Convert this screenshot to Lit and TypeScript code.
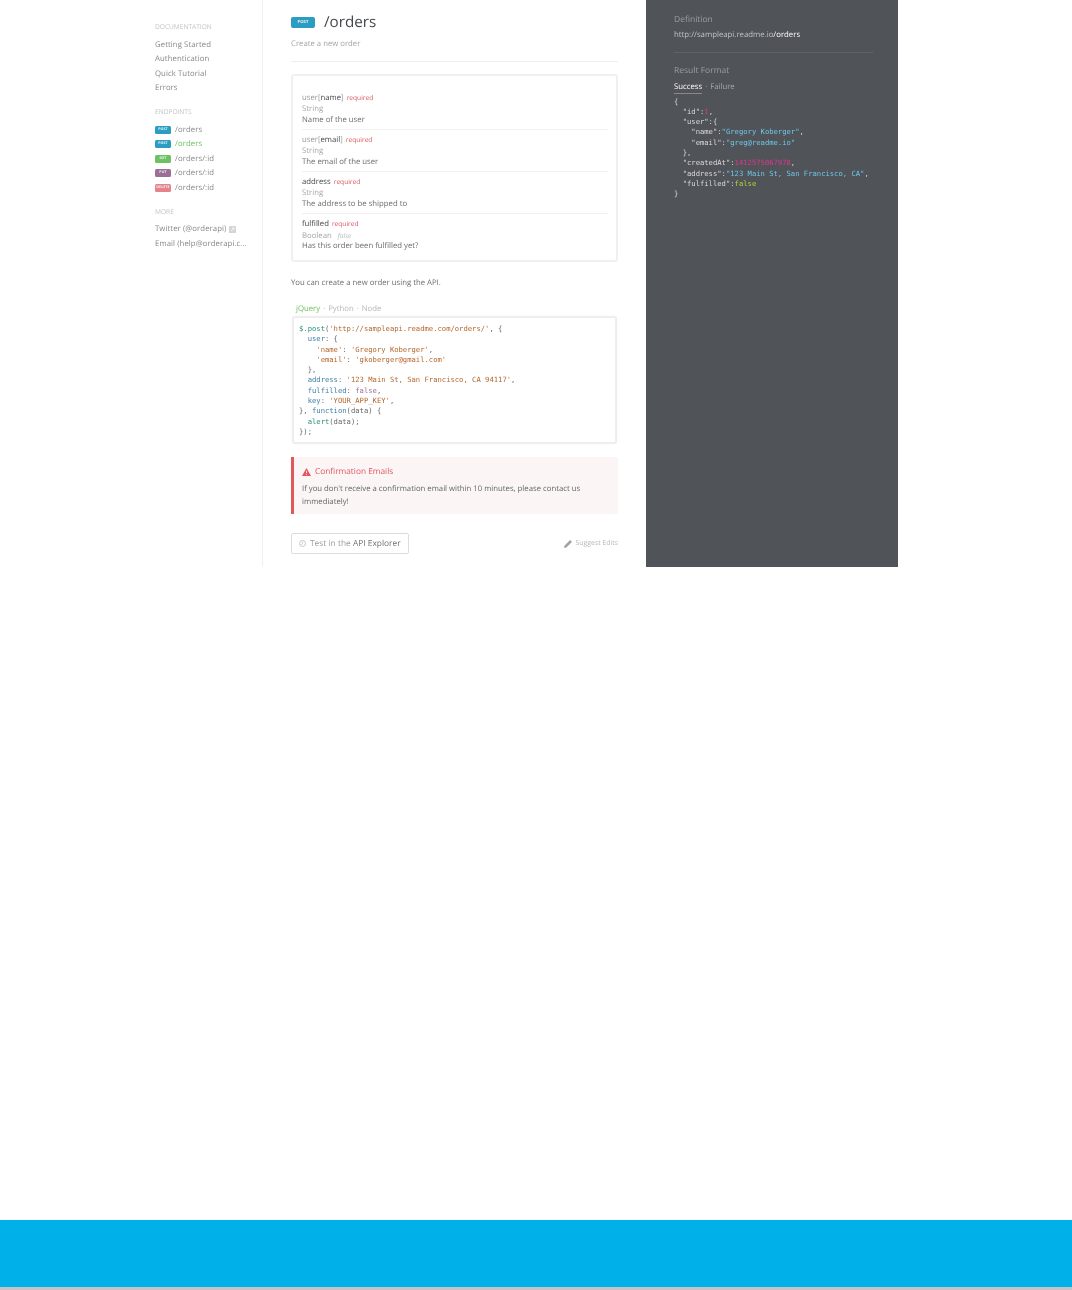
import { LitElement, html, css } from "lit";
import { customElement } from "lit/decorators.js";

const nav = ["Getting Started", "Authentication", "Quick Tutorial", "Errors"];
const eps = [
  ["POST", "post", "/orders", false],
  ["POST", "post", "/orders", true],
  ["GET", "get", "/orders/:id", false],
  ["PUT", "put", "/orders/:id", false],
  ["DELETE", "del", "/orders/:id", false],
] as const;
const params = [
  { pre: "user[", key: "name", post: "]", type: "String", desc: "Name of the user" },
  { pre: "user[", key: "email", post: "]", type: "String", desc: "The email of the user" },
  { pre: "", key: "address", post: "", type: "String", desc: "The address to be shipped to" },
  { pre: "", key: "fulfilled", post: "", type: "Boolean", def: "false", desc: "Has this order been fulfilled yet?" },
];

@customElement("app-root")
export class AppRoot extends LitElement {
  static styles = css`
    :host { display: block; height: 1290px; background: #fff; font-family: "Open Sans", sans-serif; font-size: 7.75px; color: #55585e; overflow: hidden; text-rendering: geometricPrecision; }
    .page { display: flex; flex-direction: column; height: 1290px; }
    .doc { display: flex; height: 567px; margin-left: 155px; width: 743px; flex: none; filter: blur(0.25px); }
    .side { width: 107px; flex: none; border-right: 1px solid #f0f0f0; padding-top: 20px; box-sizing: content-box; }
    .side h4 { margin: 0; font-size: 6.6px; line-height: 14px; font-weight: 400; color: #c2c4c7; text-transform: uppercase; }
    .side ul { list-style: none; margin: 0 0 9.5px; padding: 3.5px 0 0; }
    .side li { height: 14.5px; line-height: 14.5px; white-space: nowrap; color: #85888c; letter-spacing: .08px; display: flex; align-items: center; }
    .badge { display: inline-flex; align-items: center; justify-content: center; width: 16px; height: 8px; border-radius: 1.5px; color: #e6f2f6; font-size: 3.6px; font-weight: 700; margin-right: 4px; flex: none; letter-spacing: .1px; }
    .post { background: #2a9dc0; } .get { background: #6cc261; } .put { background: #9c6f97; } .del { background: #e5828a; }
    .active { color: #6cbf5c !important; }
    .ext { margin-left: 3px; }
    .main { width: 327px; margin-left: 28px; flex: none; }
    .head { display: flex; align-items: center; height: 22px; margin-top: 11px; }
    .head .badge { width: 24px; height: 11px; font-size: 4.2px; margin-right: 9px; border-radius: 2px; }
    .head h1 { margin: 0.4px 0 0; font-size: 15.2px; font-weight: 400; color: #43464b; line-height: 22px; }
    .sub { margin: 5.5px 0 0; line-height: 10px; color: #a2a4a7; height: 12.5px; }
    hr { border: 0; border-top: 1px solid #eeeeee; margin: 0; }
    .head-rule { margin-top: 10px; }
    .box { margin-top: 12px; border: 2px solid #f0f0f0; border-radius: 3px; height: 188px; box-sizing: border-box; padding: 11.6px 8px 0 9px; }
    .param { height: 42px; border-bottom: 1px solid #f1f1f1; box-sizing: border-box; padding-top: 4.2px; }
    .param:last-child { border: 0; }
    .param div { line-height: 11.4px; height: 11.4px; white-space: nowrap; }
    .param .name { color: #96989c; height: 11.8px; }
    .name b { font-weight: 400; color: #43464b; }
    .req { color: #d9555f; font-size: 6.6px; margin-left: 1px; }
    .type { color: #a4a6a9; }
    .def { color: #b5b7ba; font-style: italic; font-size: 6.6px; margin-left: 6px; }
    .desc { color: #6a6d72; }
    .para { margin: 16px 0 0; line-height: 11px; color: #6a6d72; }
    .tabs { margin: 15px 0 0 5px; line-height: 11px; color: #b6b8bb; display: flex; gap: 3px; }
    .tabs .on { color: #6cbf5c; }
    .code { margin: 1px 1px 0; height: 128px; border: 2px solid #eeeeee; border-radius: 3px; box-sizing: border-box; padding: 6px 5px 0; font-family: "DejaVu Sans Mono", monospace; font-size: 7.2px; line-height: 10.3px; white-space: pre; color: #63666b; box-shadow: 0 0 1px #ddd; }
    .alert { margin-top: 13px; height: 57px; background: #fbf6f5; border-left: 3px solid #e0575d; box-sizing: border-box; padding: 8px 8px 0; }
    .alert h5 { margin: 0 0 5px; font-size: 8.3px; line-height: 13px; font-weight: 400; color: #e0575d; display: flex; align-items: center; gap: 4px; }
    .alert p { margin: 0; line-height: 13px; color: #63666b; }
    .foot { display: flex; justify-content: space-between; align-items: center; margin-top: 19px; height: 21px; }
    .btn { width: 118px; height: 21px; box-sizing: border-box; border: 1px solid #dcdcdc; border-radius: 2px; display: flex; align-items: center; gap: 4px; padding: 0 0 1px 7px; color: #9a9ca0; white-space: nowrap; font-size: 8.4px; }
    .btn b { font-weight: 400; color: #6f7276; }
    .edit { display: flex; align-items: center; gap: 4px; color: #b5b7ba; font-size: 6.9px; }
    .right { width: 252px; margin-left: 28px; flex: none; background: #505358; padding: 14px 25px 0 28px; box-sizing: border-box; color: #a4a7aa; }
    .right h3 { margin: 0; font-weight: 400; font-size: 8.5px; line-height: 12px; color: #9a9da1; }
    .url { margin-top: 4px; line-height: 11px; color: #c2c4c6; font-size: 7.8px; }
    .url b { font-weight: 400; color: #fff; }
    .rrule { border-top: 1px solid #5f6267; margin-top: 11px; margin-bottom: 12px; }
    .rtabs { margin-top: 5px; line-height: 11px; height: 12px; display: flex; gap: 3px; align-items: flex-start; }
    .rtabs .on { color: #fff; border-bottom: 1px solid #85888c; padding-bottom: 0; }
    .rcode { margin-top: 2.6px; font-family: "DejaVu Sans Mono", monospace; font-size: 7.2px; line-height: 10.3px; white-space: pre; color: #d8dadc; }
    .s { color: #b5672d; } .k { color: #3c7fa6; } .p { color: #9c6f97; } .f { color: #2a8f7c; }
    .rs { color: #6fc6e8; } .rn { color: #e0368f; } .rb { color: #b5d334; }
    .spacer { flex: 1; }
    .band { height: 67px; background: #00b0e8; flex: none; }
    .band-edge { height: 3px; background: #c4c4c4; flex: none; }
  `;

  render() {
    const gap = html`<span>·</span>`;
    return html`<div class="page">
      <div class="doc">
        <aside class="side">
          <h4>Documentation</h4>
          <ul>${nav.map((n) => html`<li>${n}</li>`)}</ul>
          <h4>Endpoints</h4>
          <ul>${eps.map(([l, c, p, a]) => html`<li class=${a ? "active" : ""}><span class="badge ${c}">${l}</span>${p}</li>`)}</ul>
          <h4>More</h4>
          <ul>
            <li>Twitter (@orderapi)<svg class="ext" width="7" height="7" viewBox="0 0 7 7">
              <rect width="7" height="7" rx=".6" fill="#d4d5d7"/><path d="M2 5 5 2M3 2h2v2" stroke="#fff" stroke-width=".7" fill="none"/></svg></li>
            <li>Email (help@orderapi.c...</li>
          </ul>
        </aside>
        <main class="main">
          <div class="head"><span class="badge post">POST</span><h1>/orders</h1></div>
          <p class="sub">Create a new order</p>
          <hr class="head-rule" />
          <div class="box">
            ${params.map((p) => html`<div class="param">
              <div class="name">${p.pre}<b>${p.key}</b>${p.post} <span class="req">required</span></div>
              <div class="type">${p.type}${p.def ? html`<span class="def">${p.def}</span>` : ""}</div>
              <div class="desc">${p.desc}</div>
            </div>`)}
          </div>
          <p class="para">You can create a new order using the API.</p>
          <div class="tabs"><span class="on">jQuery</span>${gap}<span>Python</span>${gap}<span>Node</span></div>
          <div class="code"><span class="f">$.post</span>(<span class="s">'http://sampleapi.readme.com/orders/'</span>, {
  <span class="k">user</span>: {
    <span class="s">'name'</span>: <span class="s">'Gregory Koberger'</span>,
    <span class="s">'email'</span>: <span class="s">'gkoberger@gmail.com'</span>
  },
  <span class="k">address</span>: <span class="s">'123 Main St, San Francisco, CA 94117'</span>,
  <span class="k">fulfilled</span>: <span class="p">false</span>,
  <span class="k">key</span>: <span class="s">'YOUR_APP_KEY'</span>,
}, <span class="k">function</span>(data) {
  <span class="f">alert</span>(data);
});</div>
          <div class="alert">
            <h5><svg width="9" height="8" viewBox="0 0 9 8"><path d="M4.5 0 9 8H0Z" fill="#e0575d"/><path d="M4.5 2.8v2.4M4.5 6v.8" stroke="#fbf6f5" stroke-width=".9"/></svg>Confirmation Emails</h5>
            <p>If you don't receive a confirmation email within 10 minutes, please contact us immediately!</p>
          </div>
          <div class="foot">
            <div class="btn"><svg width="7" height="7" viewBox="0 0 7 7"><circle cx="3.5" cy="3.5" r="3" fill="none" stroke="#b5b7ba" stroke-width=".8"/><path d="M3.5 1.8v1.8L2.2 5" fill="none" stroke="#b5b7ba" stroke-width=".7"/></svg><span>Test in the <b>API Explorer</b></span></div>
            <div class="edit"><svg width="8" height="8" viewBox="0 0 8 8"><path d="M0 8l.6-2.4L5.6.6a.8.8 0 0 1 1.1 0l.7.7a.8.8 0 0 1 0 1.1L2.4 7.4Z" fill="#a0a2a6"/></svg>Suggest Edits</div>
          </div>
        </main>
        <section class="right">
          <h3>Definition</h3>
          <div class="url">http://sampleapi.readme.io<b>/orders</b></div>
          <div class="rrule"></div>
          <h3>Result Format</h3>
          <div class="rtabs"><span class="on">Success</span>${gap}<span>Failure</span></div>
          <div class="rcode">{
  "id":<span class="rn">1</span>,
  "user":{
    "name":<span class="rs">"Gregory Koberger"</span>,
    "email":<span class="rs">"greg@readme.io"</span>
  },
  "createdAt":<span class="rn">1412575067978</span>,
  "address":<span class="rs">"123 Main St, San Francisco, CA"</span>,
  "fulfilled":<span class="rb">false</span>
}</div>
        </section>
      </div>
      <div class="spacer"></div>
      <div class="band"></div>
      <div class="band-edge"></div>
    </div>`;
  }
}
